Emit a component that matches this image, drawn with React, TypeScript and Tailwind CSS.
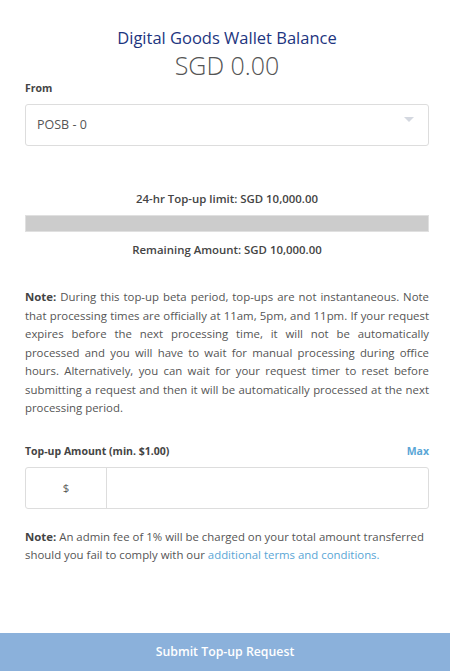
const App = () => {
  return (
    <div className="w-[450px] h-[671px] bg-white flex flex-col font-['Open_Sans',sans-serif] text-[#555]">
      <div className="flex-1 pl-[25px] pr-[21px]">
        {/* Balance */}
        <div className="pt-[26px] text-center">
          <h2 className="text-[16.5px] leading-[24px] text-[#1d3580]">Digital Goods Wallet Balance</h2>
          <p className="text-[25px] leading-[30px] font-light text-[#555]">SGD 0.00</p>
        </div>

        {/* From */}
        <label className="block mt-0 text-[10.5px] font-bold text-[#444] leading-[16px]">From</label>
        <div className="mt-[8px] h-[42px] border border-[#ddd] rounded-[3px] flex items-center justify-between pl-[11px] pr-[14px]">
          <span className="text-[12.5px] text-[#555]">POSB - 0</span>
          <svg width="10" height="6" viewBox="0 0 10 6" className="mb-[10px]">
            <path d="M0 0 L10 0 L5 5 Z" fill="#d4d8e0" />
          </svg>
        </div>

        {/* Limit */}
        <p className="mt-[44px] text-center text-[11.4px] font-semibold leading-[18px] text-[#444]">
          24-hr Top-up limit: SGD 10,000.00
        </p>
        <div className="mt-[7px] h-[17px] bg-[#cccccc] border border-[#e0e0e0]" />
        <p className="mt-[9px] text-center text-[11.4px] font-semibold leading-[18px] text-[#444]">
          Remaining Amount: SGD 10,000.00
        </p>

        {/* Note */}
        <p className="mt-[29px] text-[11.4px] leading-[18.5px] text-justify text-[#555]">
          <span className="font-bold text-[#444]">Note:</span> During this top-up beta period, top-ups are not
          instantaneous. Note that processing times are officially at 11am, 5pm, and 11pm. If your request expires
          before the next processing time, it will not be automatically processed and you will have to wait for manual
          processing during office hours. Alternatively, you can wait for your request timer to reset before submitting
          a request and then it will be automatically processed at the next processing period.
        </p>

        {/* Amount */}
        <div className="mt-[25px] flex items-center justify-between">
          <label className="text-[10.5px] font-bold text-[#444] leading-[16px]">Top-up Amount (min. $1.00)</label>
          <span className="text-[10.5px] font-bold text-[#5aa6d6] leading-[16px]">Max</span>
        </div>
        <div className="mt-[8px] h-[42px] border border-[#ddd] rounded-[3px] flex">
          <div className="w-[81px] border-r border-[#ddd] flex items-center justify-center text-[11.4px] text-[#555]">$</div>
          <input className="flex-1 outline-none px-[10px] text-[13px]" />
        </div>

        <p className="mt-[19px] text-[11.4px] leading-[18px] text-[#555]">
          <span className="font-bold text-[#444]">Note:</span> An admin fee of 1% will be charged on your total amount
          transferred should you fail to comply with our{" "}
          <a className="text-[#5aa6d6]">additional terms and conditions.</a>
        </p>
      </div>

      <button className="h-[38px] w-full bg-[#8bb1db] text-white text-[12.3px] font-semibold">
        Submit Top-up Request
      </button>
    </div>
  );
};

export default App;
